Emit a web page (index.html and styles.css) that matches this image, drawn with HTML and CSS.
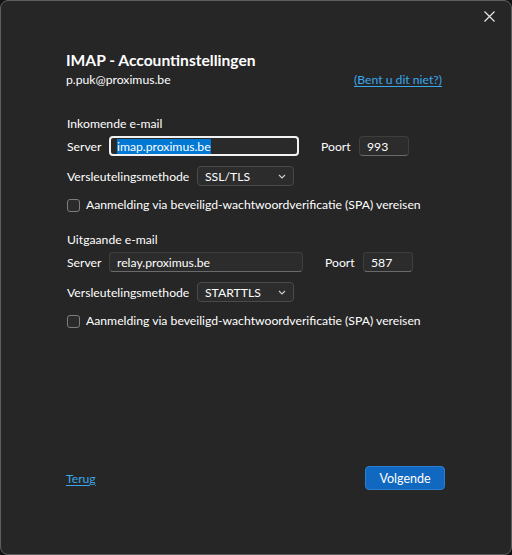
FILE: index.html
```html
<!DOCTYPE html>
<html lang="nl">
<head>
<meta charset="utf-8">
<title>IMAP - Accountinstellingen</title>
<link rel="stylesheet" href="styles.css">
</head>
<body>
<div class="window">
  <div class="titlebar">
    <span class="close" aria-label="Sluiten">
      <svg width="11" height="11" viewBox="0 0 11 11"><path d="M0.5 0.5L10.5 10.5M10.5 0.5L0.5 10.5" stroke="#e6e6e6" stroke-width="1.2"/></svg>
    </span>
  </div>
  <div class="content">
    <h1 class="title">IMAP - Accountinstellingen</h1>
    <div class="account">
      <span>p.puk@proximus.be</span>
      <a class="link" href="#">(Bent u dit niet?)</a>
    </div>

    <section class="group">
      <div class="group-title">Inkomende e-mail</div>
      <div class="row">
        <span class="label lbl-server">Server</span>
        <div class="input server focused"><span class="sel">imap.proximus.be</span></div>
        <span class="label poort">Poort</span>
        <div class="input port">993</div>
      </div>
      <div class="row">
        <span class="label lbl-method">Versleutelingsmethode</span>
        <div class="select">SSL/TLS<svg class="chev" width="8" height="5" viewBox="0 0 8 5"><path d="M1 1L4 4L7 1" fill="none" stroke="#d0d0d0" stroke-width="1.1"/></svg></div>
      </div>
      <div class="check-row">
        <span class="checkbox"></span>
        <span>Aanmelding via beveiligd-wachtwoordverificatie (SPA) vereisen</span>
      </div>
    </section>

    <section class="group">
      <div class="group-title">Uitgaande e-mail</div>
      <div class="row">
        <span class="label lbl-server">Server</span>
        <div class="input server out">relay.proximus.be</div>
        <span class="label poort">Poort</span>
        <div class="input port">587</div>
      </div>
      <div class="row">
        <span class="label lbl-method">Versleutelingsmethode</span>
        <div class="select">STARTTLS<svg class="chev" width="8" height="5" viewBox="0 0 8 5"><path d="M1 1L4 4L7 1" fill="none" stroke="#d0d0d0" stroke-width="1.1"/></svg></div>
      </div>
      <div class="check-row">
        <span class="checkbox"></span>
        <span>Aanmelding via beveiligd-wachtwoordverificatie (SPA) vereisen</span>
      </div>
    </section>

    <div class="spacer"></div>

    <div class="footer">
      <a class="link" href="#">Terug</a>
      <button class="primary">Volgende</button>
    </div>
  </div>
</div>
</body>
</html>
```

FILE: styles.css
```css
* { box-sizing: border-box; }
html, body { margin: 0; padding: 0; background: #121212; }
body {
  width: 512px;
  height: 555px;
  font-family: Lato, "Noto Sans", sans-serif;
  font-size: 12.2px;
  color: #ffffff;
}
.window {
  width: 512px;
  height: 555px;
  background: #262626;
  border: 1px solid #5e5e5e;
  border-radius: 8px;
  display: flex;
  flex-direction: column;
  overflow: hidden;
}
.titlebar {
  height: 30px;
  display: flex;
  justify-content: flex-end;
  align-items: center;
  padding-right: 16px;
}
.close { display: flex; width: 11px; height: 11px; }
.content {
  flex: 1;
  display: flex;
  flex-direction: column;
  padding: 18px 69px 64px 65px;
}
.title {
  margin: 0;
  font-size: 15.6px;
  font-weight: 700;
  line-height: 22px;
}
.account {
  display: flex;
  justify-content: space-between;
  align-items: center;
  margin-top: 0;
  line-height: 18px;
}
.link { color: #3aa6ec; text-decoration: underline; text-underline-offset: 2px; }
.group { margin-top: 26px; display: flex; flex-direction: column; }
.group + .group { margin-top: 17px; }
.group-title { line-height: 18px; padding-left: 1px; }
.row {
  display: flex;
  align-items: center;
  height: 20px;
  margin-top: 3px;
  white-space: nowrap;
}
.row + .row { margin-top: 10px; }
.label { padding-left: 1px; }
.lbl-server { width: 43px; }
.lbl-method { width: 131px; }
.input {
  height: 20px;
  background: #2c2c2c;
  border: 1px solid #3e3e3e;
  border-bottom-color: #6a6a6a;
  border-radius: 4px;
  padding: 0 7px;
  display: flex;
  align-items: center;
}
.server { width: 190px; }
.server.out { width: 194px; }
.input.focused {
  border: 2px solid #f2f2f2;
  padding: 0 6px;
  background: #2a2a2a;
}
.sel { background: #0078d4; color: #fff; line-height: 15px; }
.poort { margin-left: 21px; width: 39px; }
.port { width: 50px; }
.select {
  width: 97px;
  height: 20px;
  background: #2c2c2c;
  border: 1px solid #4a4a4a;
  border-radius: 4px;
  padding: 0 7px 0 7px;
  display: flex;
  align-items: center;
  justify-content: space-between;
}
.chev { display: block; }
.check-row {
  display: flex;
  align-items: center;
  margin-top: 10px;
  line-height: 18px;
  white-space: nowrap;
}
.checkbox {
  width: 13px;
  height: 13px;
  border: 1px solid #7d7d7d;
  border-radius: 3px;
  background: #2b2b2b;
  margin-right: 6px;
  margin-left: 1px;
}
.spacer { flex: 1; }
.footer {
  display: flex;
  justify-content: space-between;
  align-items: center;
}
.primary {
  width: 80px;
  height: 24px;
  background: #1068c0;
  border: 1px solid #2a7fd0;
  border-radius: 4px;
  color: #fff;
  font-family: inherit;
  font-size: 12.5px;
  padding: 0;
  margin-right: -3px;
}
```
